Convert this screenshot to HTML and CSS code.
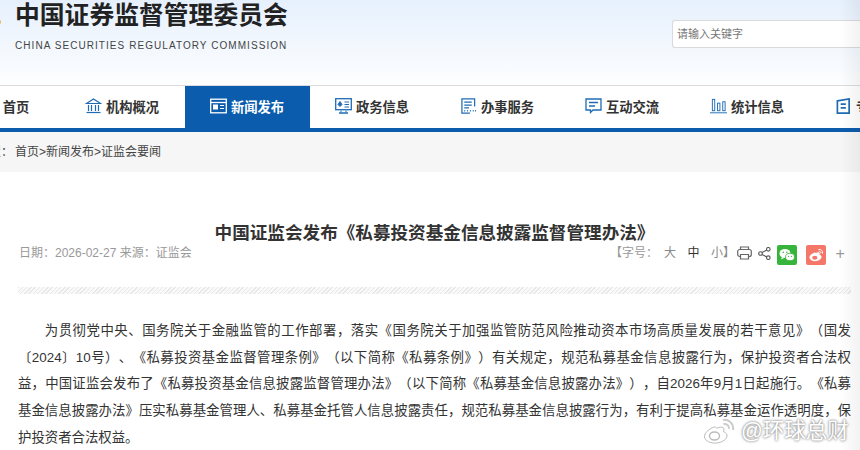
FILE: index.html
```html
<!DOCTYPE html>
<html lang="zh-CN">
<head>
    <meta charset="UTF-8">
    <title>中国证监会发布《私募投资基金信息披露监督管理办法》</title>
    <link rel="stylesheet" href="styles.css">
</head>
<body>
    <div class="header">
        <div class="logo">
            <span class="logo-mark"></span>
            <div class="logo-text">
                <div class="logo-cn">中国证券监督管理委员会</div>
                <div class="logo-en">CHINA SECURITIES REGULATORY COMMISSION</div>
            </div>
        </div>
        <div class="search">请输入关键字</div>
    </div>

    <div class="nav">
        <a class="nav-item nav-home">
            <svg class="nav-icon" viewBox="0 0 18 16"><path d="M2 2h14v12H2z" fill="none" stroke="#0c5cad" stroke-width="1.5"/></svg>
            首页
        </a>
        <a class="nav-item">
            <svg class="nav-icon" viewBox="0 0 17 16" fill="none" stroke="#1f6cb5" stroke-width="1.2"><path d="M1.5 5.5 8.500 1l7 4.500z"/><path d="M3.500 7v6M6.500 7v6M10.500 7v6M13.500 7v6"/><path d="M1.500 14.500h14"/></svg>
            机构概况
        </a>
        <a class="nav-item active">
            <svg class="nav-icon" viewBox="0 0 17 15" fill="none" stroke="#fff"><rect x="0.700" y="0.700" width="15.600" height="13.600" stroke-width="1.300"/><path d="M1 4h15" stroke-width="1.300"/><rect x="3" y="6" width="5" height="5" fill="#fff" stroke="none"/><path d="M10 7h4M10 10h4"/></svg>
            新闻发布
        </a>
        <a class="nav-item">
            <svg class="nav-icon" viewBox="0 0 17 16" fill="none" stroke="#1f6cb5"><rect x="0.700" y="0.700" width="15.600" height="11" stroke-width="1.300"/><path d="M3 6.500 5 3.500l2 3-2 2z" fill="#1f6cb5"/><path d="M9.500 4h4.500M9.500 6.500h4.500M9.500 9h4.500"/><path d="M6 12.500v2M11 12.500v2" /><path d="M4 15h9" stroke-width="1.500"/></svg>
            政务信息
        </a>
        <a class="nav-item">
            <svg class="nav-icon" viewBox="0 0 17 17" fill="none" stroke="#1f6cb5" stroke-width="1.300"><path d="M15 9V1H1.500v15H10"/><path d="M4 4.500h8M4 7.500h8M4 10.500h5"/><path d="M4 13.500h1M7 13.500h1M10 13.500h1M13 13.500h1M15.500 13.500h1" stroke-width="1.500"/></svg>
            办事服务
        </a>
        <a class="nav-item">
            <svg class="nav-icon" viewBox="0 0 17 16" fill="none" stroke="#1f6cb5" stroke-width="1.300"><path d="M1 1h15v11H8l-2.500 2.500V12H1z"/><path d="M4 4.500h9M4 8h6"/></svg>
            互动交流
        </a>
        <a class="nav-item">
            <svg class="nav-icon" viewBox="0 0 18 16" fill="none" stroke="#1f6cb5"><rect x="2.500" y="1" width="2.500" height="12"/><rect x="8" y="5" width="2.500" height="8"/><rect x="13.500" y="3.500" width="2.500" height="9.500"/><path d="M0 15.200h18"/></svg>
            统计信息
        </a>
        <a class="nav-item">
            <svg class="nav-icon" viewBox="0 0 15 17" fill="none" stroke="#1f6cb5" stroke-width="1.800"><path d="M1 3 13.500 1v15H1z"/><path d="M4.500 6.500h5.500M4.500 10.500h5.500"/></svg>
            专题专栏
        </a>
    </div>

    <div class="crumbs">
        <span class="crumbs-label">位置：</span>
        <span>首页&gt;新闻发布&gt;证监会要闻</span>
    </div>

    <div class="article">
        <h1 class="title">中国证监会发布《私募投资基金信息披露监督管理办法》</h1>
        <div class="meta">
            <div>日期：2026-02-27 来源：证监会</div>
            <div class="tools">
                <span class="size-label">【字号：</span>
                <span class="size-opt">大</span>
                <span class="size-opt current">中</span>
                <span class="size-opt">小】</span>
                <svg class="tool-print" viewBox="0 0 15 14" fill="none" stroke="#666" stroke-width="1.200"><path d="M3.500 3.500V1h8v2.500"/><rect x="0.700" y="3.500" width="13.600" height="7" rx="2"/><path d="M3.500 8.500h8v4.500h-8z" fill="#fff"/></svg>
                <svg class="tool-share" viewBox="0 0 13 13" fill="none" stroke="#555" stroke-width="1.100"><circle cx="2.500" cy="6.500" r="1.800"/><circle cx="10.300" cy="2.300" r="1.800"/><circle cx="10.300" cy="10.700" r="1.800"/><path d="M4 5.600 8.800 3.100M4 7.400l4.800 2.500"/></svg>
                <svg class="tool-badge" viewBox="0 0 20 20"><rect width="20" height="20" rx="2" fill="#37b43a"/><ellipse cx="8" cy="8.500" rx="5.500" ry="4.500" fill="#fff"/><path d="M5 12l-1 2.500L7 13z" fill="#fff"/><ellipse cx="13" cy="12" rx="4.500" ry="3.700" fill="#fff" stroke="#37b43a" stroke-width="0.800"/><circle cx="6.200" cy="7.300" r="0.800" fill="#37b43a"/><circle cx="9.800" cy="7.300" r="0.800" fill="#37b43a"/><circle cx="11.500" cy="11.300" r="0.600" fill="#37b43a"/><circle cx="14.500" cy="11.300" r="0.600" fill="#37b43a"/></svg>
                <svg class="tool-badge" viewBox="0 0 20 20"><rect width="20" height="20" rx="2" fill="#f4776a"/><path d="M8.500 7.500C5.500 8.500 3 11 3.500 13c.5 2.500 4 3.500 7 3 3-.5 5.500-2.500 5-4.500-.2-1-1.500-1.500-2-1.700.6-1.300.3-2.300-1-2.500-1-.1-2 .3-2.700.7-.3-.6-.8-.7-1.300-.5z" fill="#fff"/><ellipse cx="8.800" cy="12.700" rx="2.600" ry="2" fill="#f4776a"/><path d="M12.500 4.500c2.500-.5 4.500 1.500 4 4M12.800 6.300c1.200-.2 2.200.7 2 2" fill="none" stroke="#fff" stroke-width="1"/></svg>
                <span class="tool-plus">+</span>
            </div>
        </div>
        <div class="hatch"></div>
        <p class="body-text">为贯彻党中央、国务院关于金融监管的工作部署，落实《国务院关于加强监管防范风险推动资本市场高质量发展的若干意见》（国发〔2024〕10号）、《私募投资基金监督管理条例》（以下简称《私募条例》）有关规定，规范私募基金信息披露行为，保护投资者合法权益，中国证监会发布了《私募投资基金信息披露监督管理办法》（以下简称《私募基金信息披露办法》），自2026年9月1日起施行。《私募基金信息披露办法》压实私募基金管理人、私募基金托管人信息披露责任，规范私募基金信息披露行为，有利于提高私募基金运作透明度，保护投资者合法权益。</p>
    </div>

    <div class="watermark">
        <svg class="watermark-logo" viewBox="0 0 32 26"><path d="M11 9C6 11 1 15 1.500 19c.5 4 6 6.500 12 6 6-.6 11-4 10.500-8-.2-2-2.500-2.800-3.500-3.200 1-2.500.6-4.300-1.800-4.600-2-.2-4 .5-5.200 1.200-.5-1.300-1.500-1.600-2.500-1.400z" fill="#fff" stroke="#bbb" stroke-width="1"/><ellipse cx="11.500" cy="18" rx="5" ry="4" fill="#fff" stroke="#bbb" stroke-width="1.400"/><path d="M20 2c5-1 11 3 10 10M20.500 6c3-.6 6 1.500 5.500 5" fill="none" stroke="#ccc" stroke-width="2"/></svg>
        <span class="watermark-text">@环球总财</span>
    </div>
    <div class="edge-shade"></div>
</body>
</html>
```

FILE: styles.css
```css
:root {
    --blue: #0c5cad;
    --cjk: "Liberation Sans", "Noto Sans CJK SC", sans-serif;
}
html, body {
    height: 100%;
}
body {
    margin: 0;
    width: 860px;
    height: 450px;
    overflow: hidden;
    position: relative;
    background-color: #fff;
    color: #333;
    font-family: var(--cjk);
    text-spacing-trim: space-all;
}
.header {
    height: 85px;
    padding: 0 0 0 15px;
    display: flex;
    justify-content: space-between;
    background: linear-gradient(#e6f0fc, #fdfeff);
}
.logo {
    position: relative;
}
.logo-mark {
    position: absolute;
    left: -32px;
    top: 17px;
    width: 18px;
    height: 10px;
    border-radius: 50%;
    background-color: #e9b767;
}
.logo-cn {
    margin-top: 1px;
    font-size: 24.800px;
    line-height: 30px;
    font-weight: 700;
    color: #222;
    white-space: nowrap;
}
.logo-en {
    margin-top: 8px;
    font-size: 10px;
    line-height: 14px;
    letter-spacing: 1.060px;
    color: #444;
    white-space: nowrap;
}
.search {
    width: 188px;
    height: 28px;
    margin-top: 20px;
    padding-left: 4px;
    box-sizing: border-box;
    border: 1px solid #d9d9de;
    border-right: none;
    border-radius: 3px 0 0 3px;
    background-color: #fff;
    font-size: 11px;
    line-height: 27px;
    color: #777;
}
.nav {
    height: 42px;
    margin-left: -65px;
    display: flex;
    border-top: 1px solid #dcdcdc;
    border-bottom: 4px solid var(--blue);
    background-color: #fff;
}
.nav-item {
    flex: 0 0 125px;
    box-sizing: border-box;
    padding-bottom: 2px;
    display: flex;
    align-items: center;
    justify-content: center;
    gap: 4px;
    font-size: 13.300px;
    font-weight: 700;
    color: #333;
    white-space: nowrap;
}
.nav-home {
    padding-left: 19px;
    gap: 2px;
}
.nav-item.active {
    background-color: var(--blue);
    color: #fff;
}
.nav-icon {
    width: 17px;
    height: 16px;
    margin-left: -1px;
}
.crumbs {
    height: 37px;
    margin-left: -23px;
    padding-bottom: 3px;
    display: flex;
    align-items: center;
    background-color: #f6f6f6;
    font-size: 12px;
    color: #444;
}
.crumbs-label {
    width: 38px;
}
.article {
    padding: 0 9px 0 18px;
}
.title {
    margin: 48px 0 0;
    font-size: 17.600px;
    line-height: 26px;
    font-weight: 700;
    text-align: center;
    color: #333;
}
.meta {
    display: flex;
    justify-content: space-between;
    align-items: center;
    height: 20px;
    margin-top: -5px;
    padding-left: 1px;
    font-size: 12px;
    color: #999;
}
.tools {
    display: flex;
    align-items: center;
    width: 241px;
}
.size-label {
    width: 54px;
}
.size-opt {
    width: 23.500px;
    color: #888;
}
.size-opt.current {
    color: #333;
}
.tool-print {
    width: 15px;
    height: 14px;
    margin: 4px 0 0 2px;
}
.tool-share {
    width: 13px;
    height: 13px;
    margin: 4px 0 0 6px;
}
.tool-badge {
    width: 20px;
    height: 20px;
    margin: 8px 0 0 6px;
}
.tool-badge + .tool-badge {
    margin-left: 9px;
}
.tool-plus {
    margin: 6px 0 0 10px;
    font-size: 16px;
    color: #999;
}
.hatch {
    height: 7px;
    margin-top: 26px;
    background: repeating-linear-gradient(135deg, #e8e8e8 0 1px, #f9f9f9 1px 3px);
}
.body-text {
    margin: 24px 0 0;
    font-size: 13.400px;
    line-height: 26.700px;
    text-indent: 2em;
    text-align: justify;
    color: #333;
}
.watermark {
    position: absolute;
    left: 703px;
    top: 418px;
    display: flex;
    align-items: center;
    gap: 6px;
}
.watermark-logo {
    width: 32px;
    height: 26px;
}
.watermark-text {
    font-size: 21.500px;
    line-height: 26px;
    color: #fff;
    text-shadow: 0 0 3px #888, 0 0 2px #999;
}
.edge-shade {
    position: absolute;
    right: 0;
    top: 0;
    bottom: 0;
    width: 20px;
    background: linear-gradient(to right, rgba(0, 0, 0, 0), rgba(0, 0, 0, 0.05));
}
```
